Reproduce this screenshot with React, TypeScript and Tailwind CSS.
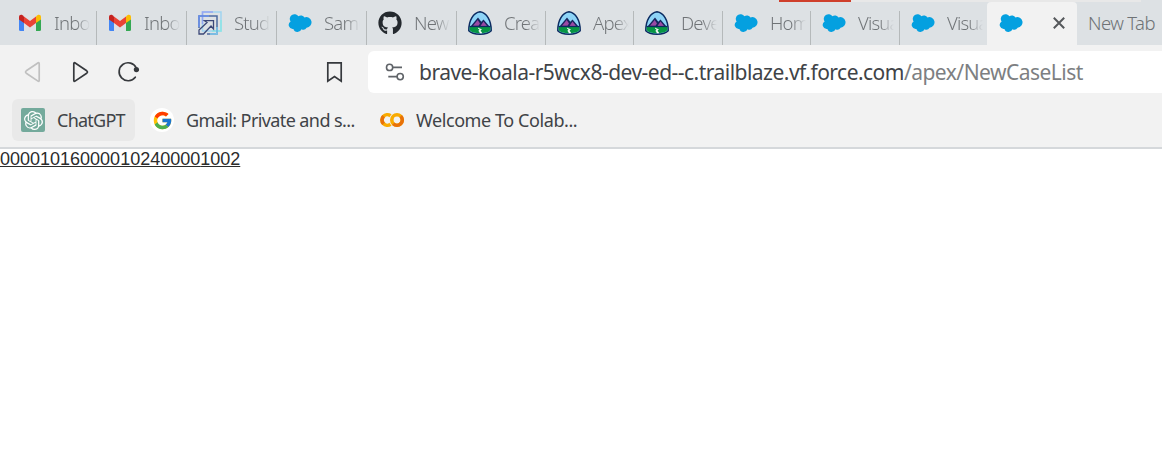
import type { ReactNode } from 'react';
import { FaGithub } from 'react-icons/fa';
import { FcGoogle } from 'react-icons/fc';
import { SiOpenai } from 'react-icons/si';

const Gmail = () => (
  <svg viewBox="0 0 24 24" className="size-6">
    <path d="M1 7v11.500q0 1.500 1.500 1.500H6V10z" fill="#4285f4" />
    <path d="M18 10v10h3.500q1.500 0 1.500-1.500V7z" fill="#34a853" />
    <path d="M18 5.500v6.500l5-3.500V6C23 3.500 20 3 18 5.500z" fill="#fbbc04" />
    <path d="M6 5.500l6 4.500 6-4.500v6.500l-6 4.500-6-4.500z" fill="#ea4335" />
    <path d="M1 6v2.500l5 3.500V5.500C4 3 1 3.500 1 6z" fill="#c5221f" />
  </svg>
);

const Studio = () => (
  <svg viewBox="0 0 24 24" className="size-6" fill="none">
    <path d="M4.500 1H23v19H4.500z" stroke="#a0d4f0" strokeWidth="1.500" />
    <path d="M4.500 13V1H15" stroke="#96a6f2" strokeWidth="1.500" />
    <path d="M23 9v11h-9" stroke="#8ce6e5" strokeWidth="1.500" />
    <path d="M1 17V5h18v18H9" stroke="#4c6a9e" strokeWidth="1.500" />
    <path d="M1 16V5h10" stroke="#6b92ee" strokeWidth="1.500" />
    <path d="M12 23h7v-7" stroke="#7fcdf2" strokeWidth="1.500" />
    <path d="M1 23v-4l8-7.500-2.500-1.800h9V18l-2.500-3-7.500 8z" stroke="#3c4878" strokeWidth="1.300" />
  </svg>
);

const Cloud = () => (
  <svg viewBox="0 0 24 24" className="size-6" fill="#04a0e0">
    <path d="M10.400 5.200A4.300 4.300 0 0 1 16.500 6.400 5.300 5.300 0 1 1 18.600 16.700a3.900 3.900 0 0 1-5.100 1.600 4.300 4.300 0 0 1-8.100-.3A4.100 4.100 0 0 1 2.600 10.500 4.700 4.700 0 0 1 10.400 5.200z" />
  </svg>
);

const Trail = () => (
  <svg viewBox="0 0 24 24" className="size-6">
    <path d="M12 .8C18.500 1.800 23.300 9 23.200 19.800 21 22.300 17 23.200 12 23.200S3 22.300 .8 19.800C.7 9 5.500 1.800 12 .8z" fill="#8ed4f7" stroke="#0b2b61" strokeWidth="1.500" strokeLinejoin="round" />
    <path d="M2.500 15.500L10 6.500l3.300 4.200L15.500 8.500l6 7z" fill="#17265f" />
    <path d="M5 14.800l4.700-5.800 2.300 3.500-1.500 2.300zM12.500 15l3-4.500 3.500 4.500z" fill="#9b4aa3" />
    <path d="M1.700 15.700h20.600v3.600c-2 2.300-5.700 3-10.300 3S3.700 21.600 1.700 19.300z" fill="#079544" />
    <path d="M1.500 15.500h21" stroke="#0b2b61" strokeWidth="1.200" />
    <path d="M10 17l3.500 1.500-1.200 1.200 1.600 2.300h-1.800l-1.300-2.200 1-1z" fill="#fff" stroke="#fff" strokeWidth=".5" />
  </svg>
);

const Colab = () => (
  <svg viewBox="0 0 24 24" className="size-6" fill="none" strokeWidth="3.600">
    <path d="M10.500 7.800A5.300 5.300 0 1 0 10.500 16.200" stroke="#f9ab00" />
    <path d="M3.600 8.200A5.300 5.300 0 0 0 3.600 15.800" stroke="#e8710a" />
    <circle cx="17" cy="12" r="5.200" stroke="#f9ab00" />
    <path d="M20.700 8.300A5.200 5.200 0 0 1 13.300 15.700" stroke="#e8710a" />
  </svg>
);

type TabInfo = { icon: ReactNode; label: string; width: string };

const tabs: TabInfo[] = [
  { icon: <Gmail />, label: 'Inbo', width: 'w-[97px] pl-[18px]' },
  { icon: <Gmail />, label: 'Inbo', width: 'w-[90px] pl-[11px]' },
  { icon: <Studio />, label: 'Stud', width: 'w-[90px] pl-[11px]' },
  { icon: <Cloud />, label: 'Samu', width: 'w-[90px] pl-[11px]' },
  { icon: <FaGithub className="size-6 text-[#24292e]" />, label: 'New', width: 'w-[90px] pl-[11px]' },
  { icon: <Trail />, label: 'Crea', width: 'w-[89px] pl-[11px]' },
  { icon: <Trail />, label: 'Apex', width: 'w-[88px] pl-[11px]' },
  { icon: <Trail />, label: 'Deve', width: 'w-[89px] pl-[11px]' },
  { icon: <Cloud />, label: 'Hom', width: 'w-[88px] pl-[11px]' },
  { icon: <Cloud />, label: 'Visua', width: 'w-[89px] pl-[11px]' },
  { icon: <Cloud />, label: 'Visua', width: 'w-[87px] pl-[11px]' },
];

function Tab({ icon, label, width, last }: TabInfo & { last: boolean }) {
  return (
    <div className={`${width} flex h-[34px] shrink-0 items-start ${last ? '' : 'border-r border-[#b5b9ba]'}`}>
      <span className="size-6 shrink-0">{icon}</span>
      <span className="ml-3 w-9 overflow-hidden whitespace-nowrap bg-linear-to-r from-[#6f7376] from-60% to-[#dde1e4] bg-clip-text text-[18.5px] leading-[23px] font-light tracking-[-0.8px] text-transparent">
        {label}
      </span>
    </div>
  );
}

export default function App() {
  return (
    <div className="h-[468px] w-[1162px] overflow-hidden bg-white font-['Noto_Sans',sans-serif]">
      <header className="flex h-[149px] flex-col border-b-2 border-[#d5d8db] bg-[#f2f2f2]">
        <div className="flex h-[45px] flex-col bg-[#dde1e4]">
          <div className="flex h-[2px] pl-[779px]">
            <div className="w-[72px] bg-[#cf3f2b]" />
            <div className="w-[290px] bg-[#e8e8e8]" />
          </div>
          <div className="flex h-[43px] items-end">
            {tabs.map((t, i) => (
              <Tab key={i} {...t} last={i === tabs.length - 1} />
            ))}
            <div className="flex h-[43px] w-[90px] shrink-0 items-start justify-between rounded-t bg-[#f2f2f2] pt-[9px] pr-3 pl-3">
              <Cloud />
              <svg viewBox="0 0 12 12" className="mt-[6px] size-3" stroke="#55585b" strokeWidth="2">
                <path d="M.8.8l10.400 10.400M11.200.8L.8 11.200" />
              </svg>
            </div>
            <div className="h-[34px] pl-[11px] text-[18.5px] leading-[23px] font-light tracking-[-0.6px] whitespace-nowrap text-[#6f7376]">New Tab</div>
          </div>
        </div>
        <div className="flex h-[54px] items-center">
          <svg viewBox="0 0 24 24" className="ml-5 size-6" fill="none" stroke="#c0c0c0" strokeWidth="1.700" strokeLinejoin="round">
            <path d="M18.200 2.800Q19.200 2.300 19.200 3.800v16.500q0 1.500-1.200.8L6.300 13.200q-1.500-1.200 0-2.400z" />
          </svg>
          <svg viewBox="0 0 24 24" className="ml-6 size-6" fill="none" stroke="#36393d" strokeWidth="1.700" strokeLinejoin="round">
            <path d="M6.800 2.800Q5.800 2.300 5.800 3.800v16.500q0 1.500 1.200.8l11.700-7.900q1.500-1.200 0-2.400z" />
          </svg>
          <svg viewBox="0 0 24 24" className="ml-6 size-6 overflow-visible" fill="none" stroke="#36393d" strokeWidth="1.700" strokeLinecap="round">
            <path d="M19.300 17.200A9 9 0 1 1 20.300 8" />
            <circle cx="20.400" cy="9.600" r="2.600" fill="#36393d" stroke="none" />
            <path d="M20 9.800h2.300" />
          </svg>
          <svg viewBox="0 0 24 24" className="ml-[182px] size-6" fill="none" stroke="#36393d" strokeWidth="1.700">
            <path d="M5.800 2.800h13.400v18.400l-6.700-4.700-6.700 4.700z" />
          </svg>
          <div className="ml-[22px] flex h-[42px] flex-1 items-center rounded-l-md bg-white">
            <svg viewBox="0 0 20 20" className="mt-[2px] ml-[17px] size-5" fill="none" stroke="#5f6368" strokeWidth="1.600">
              <circle cx="4.600" cy="4.400" r="3.100" />
              <path d="M7.700 4.400H17M3.300 13.600H12" />
              <circle cx="15.200" cy="13.600" r="3.100" />
            </svg>
            <span className="ml-[14px] text-[21px] leading-7 tracking-[-0.52px] whitespace-nowrap text-[#404347]">
              brave-koala-r5wcx8-dev-ed--c.trailblaze.vf.force.com<span className="text-[#7d7f82]">/apex/NewCaseList</span>
            </span>
          </div>
        </div>
        <nav className="flex h-[42px] items-center pl-3 text-[18px] leading-6 whitespace-nowrap text-[#404347]">
          <div className="flex h-[42px] w-[123px] items-center rounded-md bg-[#e9e9e9] pl-[9px]">
            <span className="flex size-6 items-center justify-center rounded-[2px] bg-[#74aa9c]">
              <SiOpenai className="size-[19px] text-white" />
            </span>
            <span className="ml-3 tracking-[-0.75px]">ChatGPT</span>
          </div>
          <div className="ml-[15px] flex w-[230px] items-center">
            <span className="flex size-6 items-center justify-center rounded-full bg-white">
              <FcGoogle className="size-[21px]" />
            </span>
            <span className="ml-3 tracking-[-0.6px]">Gmail: Private and s...</span>
          </div>
          <div className="flex items-center">
            <Colab />
            <span className="ml-3 tracking-[-0.42px]">Welcome To Colab...</span>
          </div>
        </nav>
      </header>
      <main className="font-['Liberation_Sans',sans-serif] text-[18px] leading-5 text-[#2c2c2c] underline">
        00001016000010240000<wbr />1002
      </main>
    </div>
  );
}
